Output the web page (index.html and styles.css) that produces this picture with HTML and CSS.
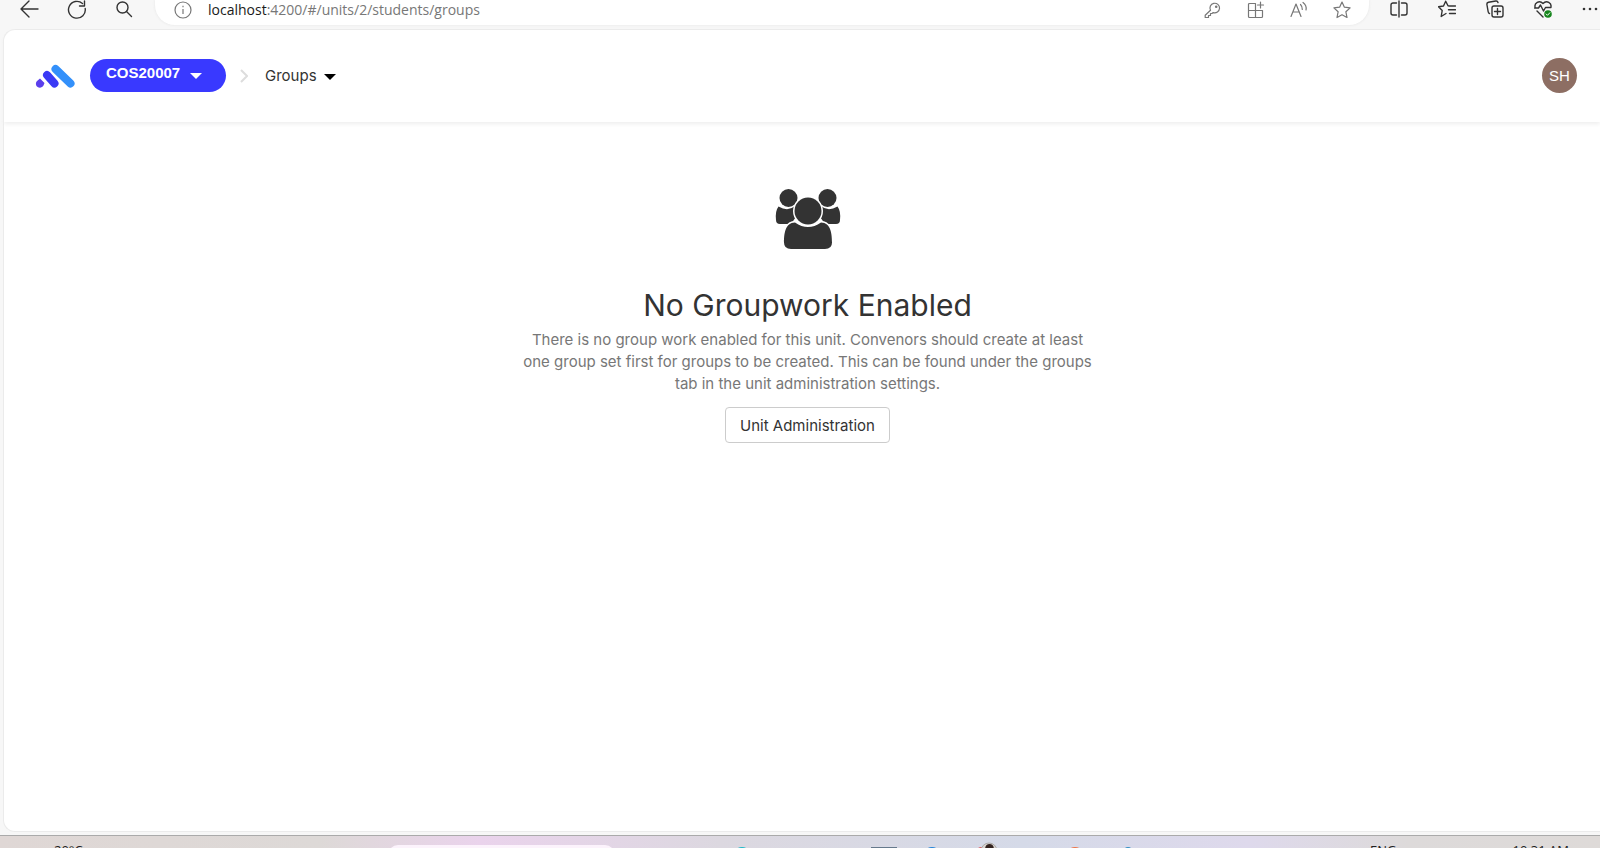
FILE: index.html
```html
<!DOCTYPE html>
<html lang="en">
<head>
<meta charset="utf-8">
<title>Groups</title>
<link rel="stylesheet" href="styles.css">
</head>
<body>
<div class="toolbar">
  <button class="tool" aria-label="Back"><svg width="20" height="20" viewBox="0 0 20 20"><path d="M19 9H2M10 1L2 9l8 8"/></svg></button>
  <button class="tool" aria-label="Refresh"><svg width="20" height="20" viewBox="0 0 20 20"><path d="M18.2 8.500A8.400 8.400 0 1 1 15.500 3.500M17.500 1v5h-5"/></svg></button>
  <button class="tool" aria-label="Search"><svg width="20" height="20" viewBox="0 0 20 20"><circle cx="7.500" cy="7.500" r="5.500"/><path d="M11.500 11.500l5 5"/></svg></button>
  <div class="address">
    <svg class="info" width="18" height="18" viewBox="0 0 18 18"><circle cx="9" cy="9" r="8"/><path d="M9 8v5M9 4.800v1.400"/></svg>
    <span class="url"><span class="host">localhost</span>:4200/#/units/2/students/groups</span>
    <div class="address-actions">
      <button class="tool" aria-label="Passwords"><svg width="18" height="18" viewBox="0 0 18 18"><path d="M6.500 9.300A4.800 4.800 0 1 1 9.200 11.600L8 12.500H6.500v2H4.500V16.500H1.200V14.300z"/><circle cx="12.200" cy="5.800" r=".7"/></svg></button>
      <button class="tool" aria-label="Apps"><svg width="18" height="18" viewBox="0 0 18 18"><path d="M8.500 2.500h-6a1 1 0 0 0-1 1v12a1 1 0 0 0 1 1h12a1 1 0 0 0 1-1V9.500h-14M8.500 2.500v14M13.500 1v6M10.500 4h6"/></svg></button>
      <button class="tool" aria-label="Read aloud"><svg width="18" height="18" viewBox="0 0 18 18"><path d="M1 15.500L6 3l5 12.500M3 11h6.500M10.500 3.500q2 2 1.800 5M13 1.500q4 3 3 7.500"/></svg></button>
      <button class="tool" aria-label="Favorite"><svg width="18" height="18" viewBox="0 0 18 18"><path d="M9 1l2.400 5.200 5.700.7-4.200 3.900 1.100 5.700L9 13.700l-5 2.800 1.100-5.700L.9 6.900l5.700-.7z"/></svg></button>
    </div>
  </div>
  <div class="browser-actions">
    <button class="tool" aria-label="Split screen"><svg width="18" height="18" viewBox="0 0 18 18"><path d="M6.500 3H3a2 2 0 0 0-2 2v8a2 2 0 0 0 2 2h3.500M11.500 3H15a2 2 0 0 1 2 2v8a2 2 0 0 1-2 2h-3.500M9 1v16"/></svg></button>
    <button class="tool" aria-label="Favorites"><svg width="18" height="18" viewBox="0 0 18 18"><path d="M11.500 6L10 5.800 7.700 1.200 5.500 6l-5 .7 3.700 3.800-1 6 4.800-3M11.500 6h6M10.500 9.800h7M11.500 13.500h6"/></svg></button>
    <button class="tool" aria-label="Collections"><svg width="18" height="18" viewBox="0 0 18 18"><rect x="6" y="6" width="11" height="11" rx="2"/><path d="M11.500 8.500v6M8.500 11.500h6M3.500 13.500a2 2 0 0 1-1.300-1.700L.9 4.500A2 2 0 0 1 2.500 2.300L9.700 1a2 2 0 0 1 2.300 1.500"/></svg></button>
    <button class="tool" aria-label="Browser essentials"><svg width="18" height="18" viewBox="0 0 18 18"><path d="M1.200 7.500C-.2 3 5.500-.5 9 3.500c3.500-4 9.200-.5 7.800 4M.5 8h4L6.500 5l3 6 2-3.500H17M3 11l6 6"/><circle class="status" cx="14" cy="14" r="3.800"/><path class="tick" d="M12.200 14l1.300 1.300 2.300-2.500"/></svg></button>
    <button class="tool" aria-label="More"><svg width="18" height="18" viewBox="0 0 18 18"><g class="dots"><circle cx="2" cy="9" r="1.300"/><circle cx="8" cy="9" r="1.300"/><circle cx="14" cy="9" r="1.300"/></g></svg></button>
  </div>
</div>
<div class="page">
  <header class="header">
    <svg class="logo" width="40" height="24" viewBox="0 0 40 24"><g fill="none" stroke-linecap="round"><path d="M20.500 5L35.500 19.500" stroke="#3390fa" stroke-width="8"/><path d="M12.500 10.500L20.500 19" stroke="#fff" stroke-width="9.500"/><path d="M12 11L19.500 19.500" stroke="#3a39f5" stroke-width="8"/><path d="M4.500 13.500l5 5" stroke="#fff" stroke-width="3"/></g><path d="M5 14.500l4.500 4.500-1 2.500A4 4 0 1 1 2 17z" fill="#5b3fec"/></svg>
    <button class="unit">COS20007<span class="caret"></span></button>
    <svg class="chevron" width="8" height="14" viewBox="0 0 8 14"><path d="M1 1l6 6-6 6"/></svg>
    <button class="section">Groups<span class="caret"></span></button>
    <button class="avatar">SH</button>
  </header>
  <main class="empty">
    <svg class="people" width="66" height="62" viewBox="0 0 66 62"><circle cx="13.500" cy="10" r="9"/><circle cx="52.500" cy="10" r="9"/><path d="M3.500 18.500Q13 24 20 18l3 8-7 10H5Q1 36 1 32 0 23 3.500 18.500zM62.500 18.500Q53 24 46 18l-3 8 7 10h11q4 0 4-4 1-9-2.500-13.500z"/><path class="halo" d="M20 34.500q13 9 26 0c10 0 11 12 11 20q0 6.500-7 6.500H16q-7 0-7-6.500c0-8 1-20 11-20z"/><circle class="halo" cx="33" cy="23" r="13.500"/></svg>
    <h1 class="title">No Groupwork Enabled</h1>
    <p class="message">There is no group work enabled for this unit. Convenors should create at least one group set first for groups to be created. This can be found under the groups tab in the unit administration settings.</p>
    <button class="admin">Unit Administration</button>
  </main>
</div>
<footer class="taskbar">
  <span class="weather">20°C</span>
  <span class="task-search"></span>
  <svg class="apps" width="400" height="14" viewBox="0 0 400 14"><circle cx="10" cy="20" r="9" fill="#20b8c8"/><path d="M139 11h26v3h-26z" fill="#66798c"/><circle cx="200" cy="20" r="9" fill="#2684d8"/><circle cx="250" cy="19" r="8" fill="#e34848"/><circle cx="257" cy="15" r="8" fill="#d9d4d0" stroke="#aaa"/><path d="M253 14q0-6 4.500-6t4.500 6z" fill="#33231f"/><circle cx="343" cy="20" r="9" fill="#ee7548"/><circle cx="396" cy="15" r="4" fill="#3491c5"/></svg>
  <span class="lang">ENG</span>
  <span class="clock">10:31 AM</span>
</footer>
</body>
</html>
```
FILE: styles.css
```css
* { box-sizing: border-box; }
body {
  margin: 0;
  height: 100vh;
  display: flex;
  flex-direction: column;
  overflow: hidden;
  background: #f7f7f7;
  color: #333;
  font-family: Inter, "Liberation Sans", sans-serif;
}
button {
  border: 0;
  padding: 0;
  background: none;
  color: inherit;
  font: inherit;
}
svg { display: block; flex: none; }

.toolbar {
  flex: none;
  height: 29px;
  display: flex;
  align-items: flex-start;
  padding-left: 19px;
  gap: 28px;
}
.tool svg {
  fill: none;
  stroke: #333;
  stroke-width: 1.4;
  stroke-linejoin: round;
  stroke-linecap: round;
}
.tool .status { fill: #16851c; stroke: none; }
.tool .tick { stroke: #fff; stroke-width: 1; }
.tool .dots { fill: #333; stroke: none; }
.address {
  flex: 1;
  height: 25px;
  margin-left: -8px;
  padding: 0 18px 6px 19px;
  display: flex;
  align-items: center;
  gap: 16px;
  background: #fff;
  border-radius: 0 0 20px 20px;
  box-shadow: 0 0 3px #e4e4e4;
}
.info { fill: none; stroke: #777; stroke-width: 1.2; }
.url {
  color: #777;
  font: 14px/18px "Open Sans", "Noto Sans", sans-serif;
}
.host { color: #1a1a1a; }
.address-actions {
  margin-left: auto;
  display: flex;
  gap: 25px;
}
.address-actions svg { stroke: #777; stroke-width: 1.2; }
.browser-actions {
  display: flex;
  gap: 30px;
  margin-left: -7px;
}

.page {
  flex: 1;
  margin-left: 3px;
  background: #fff;
  border: 1px solid #ebebeb;
  border-right: 0;
  border-radius: 12px 0 0 12px;
}
.header {
  height: 92px;
  display: flex;
  align-items: center;
  padding: 0 23px 1px 31px;
  box-shadow: 0 2px 4px #eee;
  border-radius: 12px 0 0 0;
}
.unit {
  margin-left: 15px;
  width: 136px;
  height: 33px;
  padding: 0 0 5px 16px;
  display: flex;
  align-items: center;
  gap: 10px;
  border-radius: 17px;
  background: #3939ff;
  color: #fff;
  font: bold 15px/20px "Liberation Sans", sans-serif;
}
.caret {
  margin-top: 5px;
  border: 6px solid transparent;
  border-top-color: currentColor;
  border-bottom: 0;
}
.chevron { margin: 0 17px 0 14px; fill: none; stroke: #ddd; stroke-width: 2; }
.section {
  display: flex;
  align-items: center;
  gap: 7px;
  font-size: 15px;
}
.section .caret { border-top-color: #000; margin-top: 2px; }
.avatar {
  margin-left: auto;
  width: 35px;
  height: 35px;
  border-radius: 50%;
  background: #8d6e63;
  color: #fff;
  font: 15px/20px "Liberation Sans", sans-serif;
}

.empty {
  display: flex;
  flex-direction: column;
  align-items: center;
  padding: 66px 0 0 11px;
}
.people { fill: #333; }
.halo { stroke: #fff; stroke-width: 3; paint-order: stroke; }
.title {
  margin: 35px 0 0;
  font-size: 30px;
  line-height: 40px;
  font-weight: 400;
}
.message {
  margin: 4px 0 12px;
  max-width: 576px;
  color: #777;
  font-size: 15px;
  line-height: 22px;
  text-align: center;
}
.admin {
  height: 36px;
  padding: 0 14px;
  border: 1px solid #ccc;
  border-radius: 4px;
  font-size: 15px;
}

.taskbar {
  flex: none;
  height: 13px;
  margin-top: 3px;
  padding: 0 31px 0 54px;
  display: flex;
  align-items: flex-start;
  overflow: hidden;
  border-top: 1px solid #aaa;
  background: linear-gradient(90deg, #dfd7d5, #ddd9d7 20%, #ead3ec 30%, #dcd8e0 45%, #d5dae8 64%, #ded9ec 78%, #dddada 88%, #dedad8);
  color: #222;
  font: 13px/16px "Open Sans", sans-serif;
}
.weather, .lang, .clock { padding-top: 6px; }
.weather { width: 334px; }
.task-search {
  width: 227px;
  height: 32px;
  margin-top: 9px;
  border-radius: 10px;
  background: #fcf3fc;
}
.apps { margin-left: 117px; }
.lang { margin-left: auto; }
.clock { margin-left: 116px; }
```
